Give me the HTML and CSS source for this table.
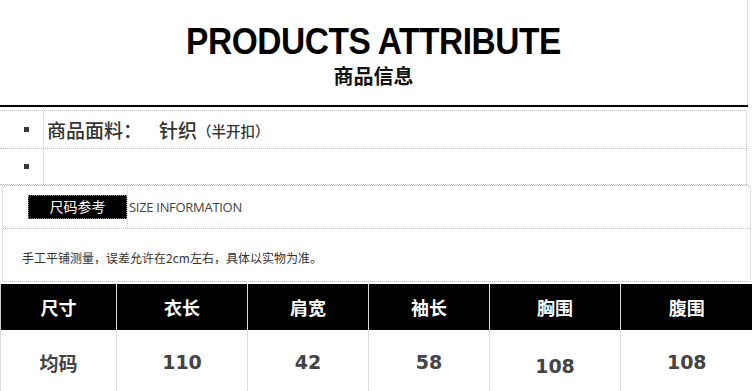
FILE: index.html
```html
<!DOCTYPE html>
<html lang="zh">
<head>
<meta charset="utf-8">
<title>Products Attribute</title>
<link rel="stylesheet" href="styles.css">
</head>
<body>
<div class="page">
  <header class="head">
    <h1 class="title"><span class="title-text">PRODUCTS ATTRIBUTE</span></h1>
    <h2 class="subtitle">商品信息</h2>
  </header>
  <div class="rule"></div>
  <ul class="attrs">
    <li class="attr">
      <span class="bullet-cell"><span class="bullet"></span></span>
      <span class="attr-text">商品面料：<span class="value">针织</span><small class="paren">（半开扣）</small></span>
    </li>
    <li class="attr">
      <span class="bullet-cell"><span class="bullet"></span></span>
      <span class="attr-text"></span>
    </li>
  </ul>
  <section class="size">
    <div class="size-head">
      <span class="tag">尺码参考</span>
      <span class="tag-en">SIZE INFORMATION</span>
    </div>
    <p class="note">手工平铺测量，误差允许在2cm左右，具体以实物为准。</p>
  </section>
  <table class="chart">
    <colgroup>
      <col class="c1"><col class="c2"><col class="c3"><col class="c4"><col class="c5"><col class="c6">
    </colgroup>
    <thead>
      <tr><th>尺寸</th><th>衣长</th><th>肩宽</th><th>袖长</th><th>胸围</th><th>腹围</th></tr>
    </thead>
    <tbody>
      <tr><td>均码</td><td>110</td><td>42</td><td>58</td><td class="low">108</td><td>108</td></tr>
    </tbody>
  </table>
</div>
</body>
</html>
```

FILE: styles.css
```css
html, body {
  margin: 0;
  padding: 0;
  background: #fff;
}
.page {
  width: 752px;
  height: 391px;
  overflow: hidden;
}
.head {
  width: 748px;
  height: 105px;
  box-sizing: border-box;
  border-right: 1px dotted #bbb;
  text-align: center;
  padding-top: 22px;
}
.title {
  margin: 0;
  font-family: "Liberation Sans", Arial, sans-serif;
  font-weight: bold;
  font-size: 36px;
  line-height: 40px;
  color: #000;
}
.title-text {
  display: inline-block;
  letter-spacing: -0.5px;
  transform: scaleX(0.93);
}
.subtitle {
  margin: 0;
  margin-top: 1px;
  font-family: "Noto Sans CJK SC", sans-serif;
  font-weight: bold;
  font-size: 20px;
  line-height: 26px;
  color: #111;
}
.rule {
  width: 748px;
  height: 2px;
  background: #000;
}
.attrs {
  list-style: none;
  margin: 3px 0 0 0;
  padding: 0;
  width: 747px;
  box-sizing: border-box;
  border-top: 1px dotted #bbb;
  border-right: 1px dotted #bbb;
}
.attr {
  display: grid;
  grid-template-columns: 44px 1fr;
  border-bottom: 1px dotted #bbb;
}
.attr:first-child { height: 37px; }
.attr:last-child { height: 35px; }
.bullet-cell {
  border-right: 1px dotted #ccc;
  display: flex;
  align-items: center;
  justify-content: flex-end;
  padding-right: 14px;
}
.bullet {
  width: 5px;
  height: 5px;
  background: #3a3a3a;
}
.attr-text {
  display: flex;
  align-items: center;
  padding-left: 3px;
  font-family: "Noto Sans CJK SC", sans-serif;
  font-weight: 500;
  font-size: 19px;
  color: #333;
}
.value {
  margin-left: 17px;
}
.paren {
  font-size: 14.5px;
  margin-top: 2px;
}
.size {
  margin-left: 2px;
  width: 749px;
  height: 97px;
  box-sizing: border-box;
  border-top: 1px dotted #bbb;
  border-left: 1px dotted #ccc;
  border-right: 1px dotted #ccc;
  border-bottom: 1px dotted #bbb;
}
.size-head {
  display: flex;
  align-items: center;
  height: 42px;
  border-bottom: 1px dotted #bbb;
}
.tag {
  margin-left: 25px;
  width: 99px;
  height: 24px;
  box-sizing: border-box;
  background: #000;
  border: 1px dotted #888;
  color: #fff;
  font-family: "Noto Sans CJK SC", sans-serif;
  font-size: 14px;
  line-height: 21px;
  text-align: center;
}
.tag-en {
  align-self: stretch;
  display: flex;
  align-items: center;
  border-left: 1px dotted #ccc;
  padding-left: 1px;
  font-family: "Open Sans", "Noto Sans CJK SC", sans-serif;
  font-size: 13px;
  color: #444;
  letter-spacing: -0.3px;
}
.note {
  margin: 21px 0 0 19px;
  font-family: "Noto Sans CJK SC", sans-serif;
  font-size: 12px;
  line-height: 16px;
  color: #333;
}
.chart {
  margin-top: 2px;
  width: 752px;
  border-collapse: collapse;
  table-layout: fixed;
}
.c1 { width: 116px; }
.c2 { width: 131px; }
.c3 { width: 121px; }
.c4 { width: 121px; }
.c5 { width: 131px; }
.c6 { width: 132px; }
.chart th {
  background: #000;
  color: #fff;
  height: 46px;
  padding: 0;
  border-left: 1px solid #ddd;
  font-family: "Noto Sans CJK SC", sans-serif;
  font-weight: bold;
  font-size: 18px;
}
.chart th:first-child { border-left: 1px solid #ccc; }
.chart td {
  height: 60px;
  padding: 0 0 2px 0;
  text-align: center;
  border-left: 1px solid #ddd;
  color: #444;
  font-family: "DejaVu Sans", Verdana, "Noto Sans CJK SC", sans-serif;
  font-weight: bold;
  font-size: 19px;
}
.chart td:first-child {
  font-family: "Noto Sans CJK SC", sans-serif;
  font-size: 19px;
}
.chart td.low { padding: 6px 0 0 0; }
```
